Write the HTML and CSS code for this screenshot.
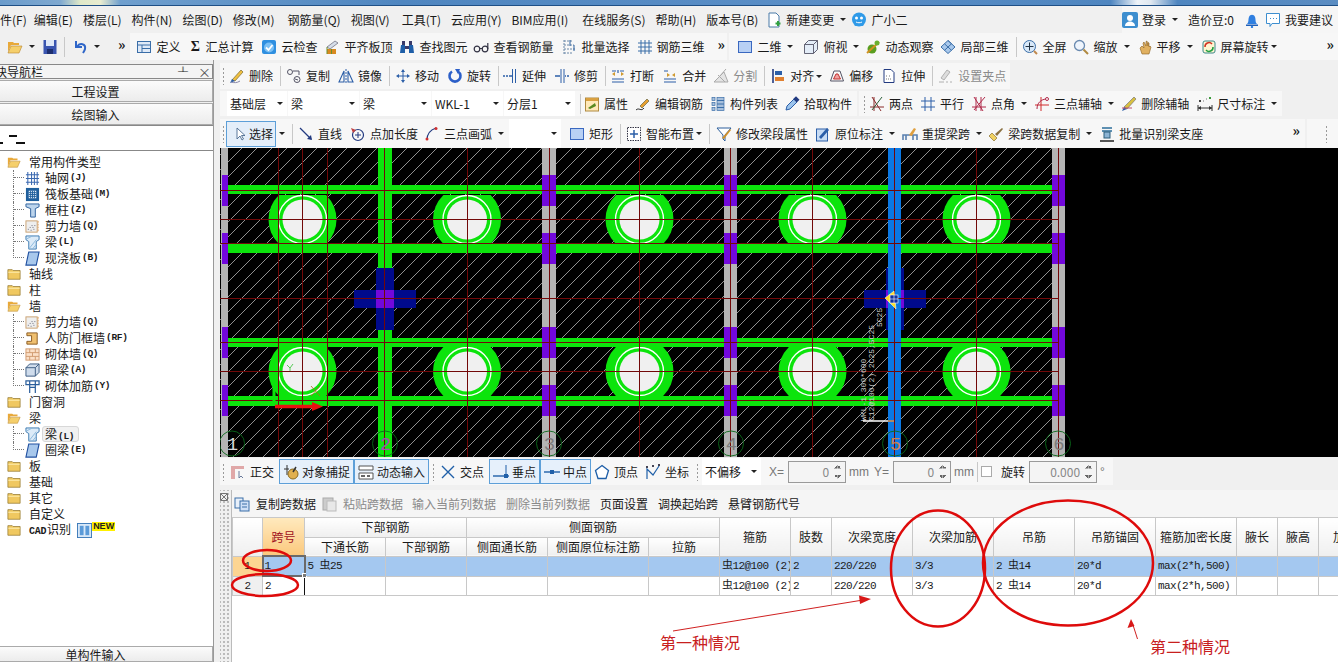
FILE: index.html
```html
<!DOCTYPE html>
<html lang="zh-CN">
<head>
<meta charset="utf-8">
<title>钢筋算量</title>
<link rel="stylesheet" href="styles.css">
</head>
<body>
<svg class="sprite" xmlns="http://www.w3.org/2000/svg">
<symbol id="folderO" viewBox="0 0 16 16"><path d="M1 3h5l1 1h5v2H4L1 13z" fill="#e8a93a"/><path d="M4 7h11l-3 7H1z" fill="#f5cf6b" stroke="#b9852c" stroke-width=".6"/></symbol>
<symbol id="folder" viewBox="0 0 16 16"><path d="M1 3h5l1 1h8v10H1z" fill="#f0c860" stroke="#8f7228" stroke-width=".8"/><path d="M1.500 6h13" stroke="#fff2b8"/></symbol>
<symbol id="floppy" viewBox="0 0 16 16"><rect x="1.500" y="1" width="13" height="14" fill="#3a55b0"/><rect x="4" y="1" width="8" height="6" fill="#dfe8f8"/><rect x="5" y="10" width="6" height="5" fill="#1d2f70"/></symbol>
<symbol id="undo" viewBox="0 0 16 16"><path d="M4 2v6h6" fill="none" stroke="#2f66c8" stroke-width="2"/><path d="M5 8c3-5 9-3 8 2-.3 1.500-1 2.500-2 4" fill="none" stroke="#2f66c8" stroke-width="2"/></symbol>
<symbol id="define" viewBox="0 0 16 16"><rect x="1.500" y="2.500" width="13" height="11" fill="#dfeaf8" stroke="#3a6ea8"/><path d="M1.500 6h13M6 6v7.500M6 9.500h8" stroke="#3a6ea8" fill="none"/></symbol>
<symbol id="cloud" viewBox="0 0 16 16"><rect x="1" y="1" width="14" height="14" rx="2" fill="#2f8fe0"/><circle cx="8" cy="8.500" r="5" fill="#7cc0f4"/><path d="M5 8.500l2.500 2.500 4-5" stroke="#fff" stroke-width="1.800" fill="none"/></symbol>
<symbol id="pingqi" viewBox="0 0 16 16"><path d="M3 8l8-6 3 2-8 6z" fill="#d5dde8" stroke="#667" stroke-width=".7"/><rect x="3" y="10" width="9" height="5" fill="#d98a20"/><path d="M3 8v7M7.500 10v5" stroke="#6a9030"/></symbol>
<symbol id="binoc" viewBox="0 0 16 16"><path d="M2 6h4v8H1zM10 6h4l1 8h-5z" fill="#1f5fa8"/><rect x="3" y="2" width="3" height="4" fill="#3a3a6a"/><rect x="10" y="2" width="3" height="4" fill="#3a3a6a"/><rect x="6" y="7" width="4" height="3" fill="#3a3a6a"/></symbol>
<symbol id="glasses" viewBox="0 0 16 16"><g fill="none" stroke="#334" stroke-width="1.200"><circle cx="4" cy="10" r="2.800"/><circle cx="12" cy="10" r="2.800"/><path d="M6.800 9.500h2.400M14.800 10V4"/></g></symbol>
<symbol id="batch" viewBox="0 0 16 16"><g fill="none" stroke="#6a88a8"><path d="M2 1v14M2 2h8M2 6h10M2 10h12M2 14h8" stroke-dasharray="2 1"/><path d="M8 1v6M12 6v6" stroke="#2b5f9c"/></g></symbol>
<symbol id="rebar" viewBox="0 0 16 16"><path d="M1 4h14M1 8h14M1 12h14M4 1v14M8 1v14M12 1v14" stroke="#3a6ea8" fill="none"/></symbol>
<symbol id="sq" viewBox="0 0 16 16"><rect x="1.500" y="2.500" width="13" height="11" fill="#b8d0f4" stroke="#3a68c0"/></symbol>
<symbol id="cube" viewBox="0 0 16 16"><path d="M1.500 5.500l4-4h9v9l-4 4h-9z" fill="#e4edf8" stroke="#556" stroke-width=".9"/><path d="M1.500 5.500h9v9M10.500 5.500l4-4" stroke="#556" fill="none" stroke-width=".9"/></symbol>
<symbol id="orbit" viewBox="0 0 16 16"><circle cx="7" cy="10" r="4.500" fill="#5a9e20"/><path d="M2 14L14 3" stroke="#d09020" stroke-width="2"/><circle cx="12" cy="4" r="2.500" fill="#6ab030"/></symbol>
<symbol id="loc3d" viewBox="0 0 16 16"><path d="M1 8l7-6.500 7 6.500-7 6.500z" fill="#a8c8ec" stroke="#3a6ea8"/><path d="M4.500 4.800l7 6.500M8 1.500l3.500 3.200M11.500 4.800l-7 6.500" stroke="#3a6ea8" fill="none"/></symbol>
<symbol id="full" viewBox="0 0 16 16"><circle cx="7.500" cy="7.500" r="6" fill="#d8e8f8" stroke="#3a6ea8"/><path d="M7.500 3.500v8M3.500 7.500h8" stroke="#234"/><path d="M12 12l3 3" stroke="#c08a50" stroke-width="2"/></symbol>
<symbol id="zoom" viewBox="0 0 16 16"><circle cx="6.500" cy="6.500" r="5" fill="#eef4fc" stroke="#6a8ab0" stroke-width="1.300"/><path d="M10.500 10.500l4.500 4.500" stroke="#b08a40" stroke-width="2"/></symbol>
<symbol id="hand" viewBox="0 0 16 16"><path d="M3 9l2 6h7l2-7-1-1-1 1V4l-1-.5V7L10 2l-1 .5V7L7 3 6 4l1 5-2-2z" fill="#e0b060" stroke="#8a6020" stroke-width=".6"/></symbol>
<symbol id="rot" viewBox="0 0 16 16"><rect x="2" y="2" width="12" height="12" rx="2" fill="#fff4d0" stroke="#3a8a8a"/><path d="M4 8a4 4 0 0 1 7-3" stroke="#d03020" stroke-width="1.500" fill="none"/><path d="M12 8a4 4 0 0 1-7 3" stroke="#20a040" stroke-width="1.500" fill="none"/></symbol>
<symbol id="del" viewBox="0 0 16 16"><path d="M3 12L12 2l2 2-8 9z" fill="#f0c040" stroke="#7a6a30" stroke-width=".7"/><path d="M1 15l2-4 3 2z" fill="#2c5fa8"/><path d="M2 14c3 1 6 1 9-1" stroke="#88a" fill="none"/></symbol>
<symbol id="copy" viewBox="0 0 16 16"><g fill="none" stroke="#556"><circle cx="4" cy="4" r="2.500"/><circle cx="11" cy="11.500" r="3"/><path d="M7 3h6M13 3v4M9 11l3 1"/></g></symbol>
<symbol id="mirror" viewBox="0 0 16 16"><path d="M8 1v14" stroke="#2c5fa8" stroke-dasharray="2 1"/><path d="M6 3v11H1zM10 3v11h5z" fill="none" stroke="#2c5fa8" stroke-width="1.100"/></symbol>
<symbol id="move" viewBox="0 0 16 16"><path d="M8 1l2 3H6zM8 15l2-3H6zM1 8l3-2v4zM15 8l-3-2v4z" fill="#2c5fa8"/><path d="M8 4v8M4 8h8" stroke="#2c5fa8"/></symbol>
<symbol id="rotate" viewBox="0 0 16 16"><path d="M5 3.500a5.500 5.500 0 1 0 6 0" fill="none" stroke="#2c5fc8" stroke-width="2.600"/><path d="M8 1h5l-2 5z" fill="#2c5fc8"/></symbol>
<symbol id="extend" viewBox="0 0 16 16"><path d="M13.500 1v14M10.500 1v14" stroke="#2c5fa8"/><path d="M1 8h2M4 8h2M7 8h3" stroke="#2c5fa8" stroke-width="1.600"/></symbol>
<symbol id="trim" viewBox="0 0 16 16"><path d="M7 1v14M10 1v14" stroke="#2c5fa8"/><path d="M1 8h5M11 8h1M13 8h2" stroke="#2c5fa8" stroke-width="1.600"/></symbol>
<symbol id="brk" viewBox="0 0 16 16"><path d="M2 3h4M10 3h4M2 11h12M2 14h12M8 2v3" stroke="#2c5fa8" stroke-width="1.200"/><path d="M2 6l3-2v4zM14 6l-3-2v4z" fill="#d09a30"/></symbol>
<symbol id="merge" viewBox="0 0 16 16"><path d="M2 3h4M2 14h12M2 11h12" stroke="#2c5fa8" stroke-width="1.200"/><path d="M5 5l3 2-3 2zM13 5l-3 2 3 2z" fill="#d09a30"/></symbol>
<symbol id="split" viewBox="0 0 16 16"><path d="M1 14h14L11 4 1 14M5 7l7 7M13 1L6 9" stroke="#aaa" fill="#e4e4e4"/></symbol>
<symbol id="align" viewBox="0 0 16 16"><path d="M3 1v14" stroke="#223a80" stroke-width="1.600"/><rect x="5" y="3" width="7" height="4" fill="#2c5fa8"/><rect x="5" y="9" width="9" height="4" fill="#e08030"/></symbol>
<symbol id="offset" viewBox="0 0 16 16"><path d="M1.500 13L5 3h6l3.500 10z" fill="none" stroke="#556" /><path d="M4.500 11L7 6h2l2.500 5z" fill="#f0a0a0" stroke="#c03030"/></symbol>
<symbol id="stretch" viewBox="0 0 16 16"><path d="M3 1.500h7l3 3V14.500H3z" fill="#fff" stroke="#223a80"/><path d="M5 8h2M8 8h2M5 11h5" stroke="#777" stroke-dasharray="1 1"/></symbol>
<symbol id="gripn" viewBox="0 0 16 16"><path d="M9 2l3 2-6 8-3-2zM1 14h5M8 14h2M12 14h2" stroke="#b0b0b0" fill="#ddd"/></symbol>
<symbol id="attr" viewBox="0 0 16 16"><rect x="1.500" y="2" width="13" height="13" fill="#ffe9b8" stroke="#b08a40"/><path d="M2 2h12v3H2z" fill="#d9a040"/><path d="M4 12l7-5 1 3-6 3z" fill="#5a8a20"/></symbol>
<symbol id="editb" viewBox="0 0 16 16"><path d="M1 14c3-3 5 2 8-2" stroke="#333" fill="none"/><path d="M5 10l7-7 2 2-7 7z" fill="#e8a030" stroke="#664" stroke-width=".7"/></symbol>
<symbol id="list" viewBox="0 0 16 16"><g fill="#a8c0dc" stroke="#3a6ea8" stroke-width=".7"><rect x="2" y="1.500" width="3" height="3"/><rect x="2" y="6.500" width="3" height="3"/><rect x="2" y="11.500" width="3" height="3"/><rect x="7" y="1.500" width="7" height="13"/></g><path d="M7 4.500h7M7 8h7M7 11.500h7" stroke="#3a6ea8"/></symbol>
<symbol id="pick" viewBox="0 0 16 16"><path d="M2 14l1-4 7-7 3 3-7 7z" fill="#9cc4ec" stroke="#2c5fa8"/><rect x="10" y="1" width="5" height="4" transform="rotate(45 12 3)" fill="#223a80"/></symbol>
<symbol id="ax2" viewBox="0 0 16 16"><path d="M3 1l9 14M1 11h14M5 1v14" stroke="#8a2a2a" fill="none"/><path d="M13 1L3 14" stroke="#2c5f3a"/></symbol>
<symbol id="par" viewBox="0 0 16 16"><path d="M1 5h14M1 11h14M5 1v14M11 1v14" stroke="#2c5fa8" fill="none"/></symbol>
<symbol id="ang" viewBox="0 0 16 16"><path d="M3 1l9 14M1 11h14M5 1v14M10 1v14" stroke="#b02a4a" fill="none"/><path d="M14 1L3 14" stroke="#b02a4a"/></symbol>
<symbol id="arc" viewBox="0 0 16 16"><path d="M1 9h14M7 1v14" stroke="#d02a2a"/><path d="M3 13c0-6 4-10 10-10" fill="none" stroke="#b02a4a"/><circle cx="13" cy="3" r="1.500" fill="#fff" stroke="#b02a4a"/></symbol>
<symbol id="delax" viewBox="0 0 16 16"><path d="M3 11L13 1l2 2L6 13z" fill="#d8c040" stroke="#667" stroke-width=".6"/><path d="M1 15l2-4 3 2z" fill="#2c5fa8"/><path d="M1 12h10" stroke="#c0506a"/></symbol>
<symbol id="dim" viewBox="0 0 16 16"><path d="M1 9v6M15 9v6M1 12h14" stroke="#333"/><path d="M1 12l3-2v4zM15 12l-3-2v4z" fill="#333"/><rect x="2" y="4" width="2" height="2" fill="#444"/><rect x="12" y="1" width="2" height="2" fill="#3a9a3a"/><path d="M6 5h1M9 3h1" stroke="#777"/></symbol>
<symbol id="cursor" viewBox="0 0 16 16"><path d="M5 2v11l3-3 2 4 1.500-1-2-3.500H13z" fill="#fff" stroke="#4a6a90" stroke-width=".9"/></symbol>
<symbol id="line" viewBox="0 0 16 16"><path d="M2 2l11 11" stroke="#223a80" stroke-width="1.200"/><path d="M14 14l-1-5-4 4z" fill="#223a80"/></symbol>
<symbol id="ptlen" viewBox="0 0 16 16"><circle cx="8" cy="9" r="5.500" fill="none" stroke="#223a80" stroke-width="1.200"/><path d="M8 6v6M5 9h6" stroke="#223a80"/><path d="M1 2l5 2-3 3z" fill="#c04040"/></symbol>
<symbol id="arc3" viewBox="0 0 16 16"><path d="M3 14C3 8 6 4 12 2" fill="none" stroke="#223a80" stroke-width="1.200"/><circle cx="3" cy="13" r="1.500" fill="#d03030"/><circle cx="12" cy="2.500" r="1.500" fill="#d03030"/></symbol>
<symbol id="smart" viewBox="0 0 16 16"><rect x="1.500" y="1.500" width="13" height="13" fill="#fff" stroke="#334" stroke-dasharray="1.500 1"/><path d="M8 4v8M4 8h8" stroke="#2c5fa8" stroke-width="1.500"/></symbol>
<symbol id="modseg" viewBox="0 0 16 16"><path d="M1 2h14L9 9v6L7 13V9z" fill="#fff" stroke="#2c5f9c"/><path d="M6 12L14 3l1 1-7 9z" fill="#d0902a"/></symbol>
<symbol id="inplace" viewBox="0 0 16 16"><rect x="1.500" y="3" width="11" height="12" fill="#c8dcf4" stroke="#2c5fa8"/><path d="M4 11l8-9 2 2-8 9z" fill="#2c5fa8"/></symbol>
<symbol id="respan" viewBox="0 0 16 16"><path d="M1 14V9h14v5M4 9v5M11 9v5" fill="none" stroke="#5a80b0" stroke-width="1.600"/><path d="M7 9l5-7 2 1-4 7z" fill="#e0a040"/></symbol>
<symbol id="brush" viewBox="0 0 16 16"><path d="M1 10l5 5 3-3-5-5z" fill="#f0d060" stroke="#887030" stroke-width=".7"/><path d="M7 8l7-6 1 1-6 7z" fill="#8a7040"/></symbol>
<symbol id="sup" viewBox="0 0 16 16"><path d="M3 2h10M3 5h10" stroke="#2c6f9c" stroke-width="1.400"/><rect x="5" y="6" width="6" height="6" fill="#8cb4d4" stroke="#2c5f7c"/><path d="M1 15h14" stroke="#555" stroke-width="2"/></symbol>
<symbol id="ortho" viewBox="0 0 16 16"><path d="M1 2h13v3H5v10H1z" fill="#e0a8a8"/><path d="M9 7v7l2-2 2 2" fill="none" stroke="#6a7a9a"/></symbol>
<symbol id="snap" viewBox="0 0 16 16"><path d="M4 1v10M1 5h5" stroke="#333"/><circle cx="10" cy="10" r="5" fill="#e0b050" stroke="#8a6a20"/><path d="M13 3l-3 5" stroke="#333" stroke-width="1.500"/></symbol>
<symbol id="dyn" viewBox="0 0 16 16"><path d="M1 2h14v4H1zM1 9h14v6H1z" fill="#fff" stroke="#555"/><path d="M3 12h4M9 12h3" stroke="#333" stroke-width="1.500"/></symbol>
<symbol id="cross" viewBox="0 0 16 16"><path d="M2 2l12 12M14 2L2 14" stroke="#1f5fa8" stroke-width="1.400"/></symbol>
<symbol id="perp" viewBox="0 0 16 16"><path d="M0 12h16" stroke="#1f5fa8" stroke-width="1.400"/><path d="M13 1v11" stroke="#1f5fa8"/><rect x="11" y="10" width="4" height="4" fill="#1f5fa8"/></symbol>
<symbol id="mid" viewBox="0 0 16 16"><path d="M0 8h16" stroke="#1f5fa8" stroke-width="1.400"/><rect x="6" y="6" width="4" height="4" fill="#1f5fa8"/></symbol>
<symbol id="vert" viewBox="0 0 16 16"><path d="M8 1.500l6.500 5-2.500 8H4l-2.500-8z" fill="#fff" stroke="#1f5fa8" stroke-width="1.300"/></symbol>
<symbol id="coord" viewBox="0 0 16 16"><path d="M2 15V5l6 6 6-9" fill="none" stroke="#1f5fa8" stroke-width="1.200"/><g fill="#445"><rect x="1" y="2" width="2" height="2"/><rect x="7" y="1" width="2" height="2"/><rect x="13" y="0" width="2" height="2"/></g></symbol>
<symbol id="cpy" viewBox="0 0 16 16"><rect x="1" y="2" width="8" height="10" fill="#e8f0fa" stroke="#3a6ea8"/><rect x="6" y="5" width="9" height="10" fill="#cfe0f6" stroke="#3a6ea8"/><path d="M8 8h5M8 11h5" stroke="#3a6ea8"/></symbol>
<symbol id="pst" viewBox="0 0 16 16"><rect x="2" y="2" width="10" height="12" fill="#ccc" stroke="#aaa"/><rect x="6" y="5" width="9" height="10" fill="#e8e8e8" stroke="#bbb"/></symbol>
<symbol id="login" viewBox="0 0 16 16"><rect width="16" height="16" rx="2" fill="#3d8ecf"/><circle cx="8" cy="6" r="3" fill="#fff"/><path d="M3 14c0-6 10-6 10 0z" fill="#fff"/></symbol>
<symbol id="bell" viewBox="0 0 16 16"><path d="M3 12c2-2 1-4 2-7s5-3 6 0 0 5 2 7z" fill="#2f7fe0"/><path d="M2 12.500h12v1.500H2z" fill="#1f5fb8"/><circle cx="8" cy="15" r="1.200" fill="#2f7fe0"/></symbol>
<symbol id="chat" viewBox="0 0 16 16"><path d="M1.500 1.500h13v10H7l-2 3v-3H1.500z" fill="#fff" stroke="#3d8ecf"/><path d="M5 6.500h1M8 6.500h1M11 6.500h1" stroke="#3d8ecf"/></symbol>
<symbol id="newdoc" viewBox="0 0 16 16"><path d="M3 1h7l3 3v11H3z" fill="#fff" stroke="#4a7aa8"/><path d="M12 9v5M9.500 11.500h5" stroke="#30a040" stroke-width="2"/></symbol>
<symbol id="gxe" viewBox="0 0 16 16"><circle cx="8" cy="7.500" r="7" fill="#2f9ae8"/><path d="M3 14l3-2h4l3 2z" fill="#2f9ae8"/><circle cx="5.500" cy="6" r="1.500" fill="#fff"/><circle cx="10.500" cy="6" r="1.500" fill="#fff"/><path d="M5 10c2 1 4 1 6 0" stroke="#fff" fill="none"/></symbol>
<symbol id="tAxis" viewBox="0 0 16 16"><path d="M1 4h14M1 8h14M1 12h14M3 1v14M7 1v14M10 1v14M13 1v14" stroke="#3a68b0" stroke-width="1.100"/></symbol>
<symbol id="tRaft" viewBox="0 0 16 16"><rect x="1" y="1" width="14" height="14" fill="#1f5f9c"/><rect x="4" y="4" width="8" height="8" fill="#e8f0fa"/><path d="M4 6h8M4 8h8M4 10h8M6 4v8M8 4v8M10 4v8" stroke="#1f5f9c"/></symbol>
<symbol id="tCol" viewBox="0 0 16 16"><path d="M1 1h14v3l-4 2v9H6V6L1 4z" fill="#bcd4ec" stroke="#2c5f9c"/></symbol>
<symbol id="tWall" viewBox="0 0 16 16"><rect x="1" y="2" width="12" height="12" fill="#eee" stroke="#c9a070"/><path d="M3 11h1M6 12h1M9 11h1M5 9h1M8 9h1M10 7h1M7 7h1" stroke="#667"/><path d="M14 2v12" stroke="#e0a060" stroke-dasharray="2 1"/></symbol>
<symbol id="tBeam" viewBox="0 0 16 16"><path d="M1 1h14v4l-3 2v8H4V7L1 5z" fill="#dcebf8" stroke="#3a78b0"/><path d="M4 15l8-10M8 15l4-5M2 4l6-3" stroke="#8ab8dc"/></symbol>
<symbol id="tSlab" viewBox="0 0 16 16"><path d="M4 1h11l-3 14H1z" fill="#a8c8ec" stroke="#2050a0" stroke-width="1.200"/></symbol>
<symbol id="tDoor" viewBox="0 0 16 16"><path d="M2 2h11v12H2v-3h5V5H2z" fill="#f0c070" stroke="#8a5a20"/></symbol>
<symbol id="tBrick" viewBox="0 0 16 16"><rect x="1" y="2" width="14" height="12" fill="#fbe0c8" stroke="#d09a70"/><path d="M1 6h14M1 10h14M5 2v4M11 2v4M8 6v4M5 10v4M11 10v4" stroke="#d09a70"/></symbol>
<symbol id="tHid" viewBox="0 0 16 16"><path d="M1 5l4-4h10v9l-4 4H1z" fill="#cfdcec" stroke="#3a5a80"/><path d="M1 5h10v9M11 5l4-4" fill="none" stroke="#3a5a80"/></symbol>
<symbol id="tAdd" viewBox="0 0 16 16"><path d="M1 2h14v4H1z" fill="none" stroke="#2c5f9c" stroke-width="1.300"/><path d="M5 2v13M11 2v13M5 9h6" stroke="#2c5f9c" stroke-width="1.300"/></symbol>
<symbol id="tCad" viewBox="0 0 16 16"><rect x=".5" y=".5" width="15" height="15" fill="#d8e8f8" stroke="#3a78b8"/><rect x="3" y="3" width="4" height="10" fill="#5a9ad8"/><rect x="9" y="3" width="4" height="10" fill="#5a9ad8"/></symbol>
</svg>

<div class="app">
<div class="title"></div>

<nav class="menu">
<span class="clip12">文件(F)</span><span>编辑(E)</span><span>楼层(L)</span><span>构件(N)</span><span>绘图(D)</span><span>修改(M)</span><span class="mp3">钢筋量(Q)</span><span>视图(V)</span><span class="mp2">工具(T)</span><span>云应用(Y)</span><span>BIM应用(I)</span><span class="mp4">在线服务(S)</span><span>帮助(H)</span><span>版本号(B)</span>
<span class="it mn2"><svg class="ic"><use href="#newdoc"/></svg>新建变更<i class="caret"></i></span>
<span class="it"><svg class="ic"><use href="#gxe"/></svg>广小二</span>
<span class="menu-right">
<span class="it"><svg class="ic"><use href="#login"/></svg>登录<i class="caret"></i></span>
<span>造价豆:0</span>
<svg class="ic bellic"><use href="#bell"/></svg>
<span class="it"><svg class="ic"><use href="#chat"/></svg>我要建议</span>
</span>
</nav>

<div class="tool1">
<svg class="ic"><use href="#folderO"/></svg><i class="caret c9"></i>
<svg class="ic"><use href="#floppy"/></svg><i class="sep"></i>
<svg class="ic"><use href="#undo"/></svg><i class="caret c9"></i>
<b class="more">»</b>
<span class="seg1">
<span class="it"><svg class="ic"><use href="#define"/></svg>定义</span>
<span class="it"><b class="sigma">Σ</b>汇总计算</span>
<span class="it"><svg class="ic"><use href="#cloud"/></svg>云检查</span>
<span class="it mn1"><svg class="ic"><use href="#pingqi"/></svg>平齐板顶</span>
<span class="it mn1"><svg class="ic"><use href="#binoc"/></svg>查找图元</span>
<span class="it mn2"><svg class="ic"><use href="#glasses"/></svg>查看钢筋量</span>
<span class="it"><svg class="ic"><use href="#batch"/></svg>批量选择</span>
<span class="it mn1"><svg class="ic"><use href="#rebar"/></svg>钢筋三维</span>
<b class="more m2">»</b>
</span>
<span class="seg2">
<span class="it"><svg class="ic"><use href="#sq"/></svg>二维<i class="caret"></i></span>
<span class="it mp2"><svg class="ic"><use href="#cube"/></svg>俯视<i class="caret"></i></span>
<span class="it mn2"><svg class="ic"><use href="#orbit"/></svg>动态观察</span>
<span class="it mn1"><svg class="ic"><use href="#loc3d"/></svg>局部三维</span>
<i class="sep"></i>
<span class="it mn8"><svg class="ic"><use href="#full"/></svg>全屏</span>
<span class="it mn1"><svg class="ic"><use href="#zoom"/></svg>缩放<i class="caret"></i></span>
<span class="it mn1"><svg class="ic"><use href="#hand"/></svg>平移<i class="caret"></i></span>
<span class="it"><svg class="ic"><use href="#rot"/></svg>屏幕旋转<i class="caret tight"></i></span>
<b class="more end">»</b>
</span>
</div>

<div class="main">
<aside class="side">
<div class="side-head"><span class="clip17">模块导航栏</span><span class="pin">╨</span><span class="closex">×</span></div>
<div class="side-btn">工程设置</div>
<div class="side-btn">绘图输入</div>
<div class="mini"><i class="m-a"></i><i class="m-b"></i></div>
<div class="tree">
<div class="node"><svg class="ic"><use href="#folderO"/></svg>常用构件类型</div>
<div class="kids">
<div class="kid"><i class="elbow"></i><svg class="ic"><use href="#tAxis"/></svg>轴网<em>(J)</em></div>
<div class="kid"><i class="elbow"></i><svg class="ic"><use href="#tRaft"/></svg>筏板基础<em>(M)</em></div>
<div class="kid"><i class="elbow"></i><svg class="ic"><use href="#tCol"/></svg>框柱<em>(Z)</em></div>
<div class="kid"><i class="elbow"></i><svg class="ic"><use href="#tWall"/></svg>剪力墙<em>(Q)</em></div>
<div class="kid"><i class="elbow"></i><svg class="ic"><use href="#tBeam"/></svg>梁<em>(L)</em></div>
<div class="kid"><i class="elbow"></i><svg class="ic"><use href="#tSlab"/></svg>现浇板<em>(B)</em></div>
</div>
<div class="node"><svg class="ic"><use href="#folder"/></svg>轴线</div>
<div class="node"><svg class="ic"><use href="#folder"/></svg>柱</div>
<div class="node"><svg class="ic"><use href="#folderO"/></svg>墙</div>
<div class="kids">
<div class="kid"><i class="elbow"></i><svg class="ic"><use href="#tWall"/></svg>剪力墙<em>(Q)</em></div>
<div class="kid"><i class="elbow"></i><svg class="ic"><use href="#tDoor"/></svg>人防门框墙<em>(RF)</em></div>
<div class="kid"><i class="elbow"></i><svg class="ic"><use href="#tBrick"/></svg>砌体墙<em>(Q)</em></div>
<div class="kid"><i class="elbow"></i><svg class="ic"><use href="#tHid"/></svg>暗梁<em>(A)</em></div>
<div class="kid"><i class="elbow"></i><svg class="ic"><use href="#tAdd"/></svg>砌体加筋<em>(Y)</em></div>
</div>
<div class="node"><svg class="ic"><use href="#folder"/></svg>门窗洞</div>
<div class="node"><svg class="ic"><use href="#folderO"/></svg>梁</div>
<div class="kids">
<div class="kid active"><i class="elbow"></i><svg class="ic"><use href="#tBeam"/></svg><span class="pill">梁<em>(L)</em></span></div>
<div class="kid"><i class="elbow"></i><svg class="ic"><use href="#tSlab"/></svg>圈梁<em>(E)</em></div>
</div>
<div class="node"><svg class="ic"><use href="#folder"/></svg>板</div>
<div class="node"><svg class="ic"><use href="#folder"/></svg>基础</div>
<div class="node"><svg class="ic"><use href="#folder"/></svg>其它</div>
<div class="node"><svg class="ic"><use href="#folder"/></svg>自定义</div>
<div class="node"><svg class="ic"><use href="#folder"/></svg><span class="cadname"><em class="cad">CAD</em>识别</span><svg class="ic cadic"><use href="#tCad"/></svg><b class="newtag">NEW</b></div>
</div>
<div class="side-btn last">单构件输入</div>
</aside>

<section class="work">
<div class="bar a">
<span class="seg"><i class="grip"></i>
<span class="it"><svg class="ic"><use href="#del"/></svg>删除</span><i class="sep"></i>
<span class="it"><svg class="ic"><use href="#copy"/></svg>复制</span>
<span class="it"><svg class="ic"><use href="#mirror"/></svg>镜像</span><i class="sep"></i>
<span class="it"><svg class="ic"><use href="#move"/></svg>移动</span>
<span class="it"><svg class="ic"><use href="#rotate"/></svg>旋转</span><i class="sep"></i>
<span class="it mn2"><svg class="ic"><use href="#extend"/></svg>延伸</span>
<span class="it"><svg class="ic"><use href="#trim"/></svg>修剪</span><i class="sep"></i>
<span class="it mn1"><svg class="ic"><use href="#brk"/></svg>打断</span>
<span class="it"><svg class="ic"><use href="#merge"/></svg>合并</span>
<span class="it off mn1"><svg class="ic"><use href="#split"/></svg>分割</span><i class="sep"></i>
<span class="it"><svg class="ic"><use href="#align"/></svg>对齐<i class="caret tight"></i></span>
<span class="it mn1"><svg class="ic"><use href="#offset"/></svg>偏移</span>
<span class="it"><svg class="ic"><use href="#stretch"/></svg>拉伸</span><i class="sep"></i>
<span class="it off"><svg class="ic"><use href="#gripn"/></svg>设置夹点</span>
</span>
</div>

<div class="bar b">
<span class="seg">
<span class="combo w62">基础层<i class="caret"></i></span>
<span class="combo w70">梁<i class="caret"></i></span>
<span class="combo w70">梁<i class="caret"></i></span>
<span class="combo w70">WKL-1<i class="caret"></i></span>
<span class="combo w70">分层1<i class="caret"></i></span>
<i class="sep"></i>
<span class="it mn2"><svg class="ic"><use href="#attr"/></svg>属性</span>
<span class="it mn1"><svg class="ic"><use href="#editb"/></svg>编辑钢筋</span>
<span class="it mn1"><svg class="ic"><use href="#list"/></svg>构件列表</span>
<span class="it mn2"><svg class="ic"><use href="#pick"/></svg>拾取构件</span>
</span>
<span class="seg second"><i class="grip"></i>
<span class="it"><svg class="ic"><use href="#ax2"/></svg>两点</span>
<span class="it"><svg class="ic"><use href="#par"/></svg>平行</span>
<span class="it"><svg class="ic"><use href="#ang"/></svg>点角<i class="caret"></i></span>
<span class="it"><svg class="ic"><use href="#arc"/></svg>三点辅轴<i class="caret"></i></span>
<span class="it"><svg class="ic"><use href="#delax"/></svg>删除辅轴</span>
<span class="it mp1"><svg class="ic"><use href="#dim"/></svg>尺寸标注<i class="caret"></i></span>
</span>
</div>

<div class="bar c">
<span class="seg full"><i class="grip"></i>
<span class="it btn sel"><svg class="ic"><use href="#cursor"/></svg>选择</span><i class="caret solo"></i><i class="sep"></i>
<span class="it"><svg class="ic"><use href="#line"/></svg>直线</span>
<span class="it"><svg class="ic"><use href="#ptlen"/></svg>点加长度</span>
<span class="it mn2"><svg class="ic"><use href="#arc3"/></svg>三点画弧<i class="caret"></i></span>
<span class="combo w55 mn3"><i class="caret"></i></span>
<span class="it"><svg class="ic"><use href="#sq"/></svg>矩形</span><i class="sep"></i>
<span class="it"><svg class="ic"><use href="#smart"/></svg>智能布置<i class="caret tight"></i></span><i class="sep"></i>
<span class="it mp1"><svg class="ic"><use href="#modseg"/></svg>修改梁段属性</span>
<span class="it mn1"><svg class="ic"><use href="#inplace"/></svg>原位标注<i class="caret"></i></span>
<span class="it mn1"><svg class="ic"><use href="#respan"/></svg>重提梁跨<i class="caret"></i></span>
<span class="it mn2"><svg class="ic"><use href="#brush"/></svg>梁跨数据复制<i class="caret"></i></span>
<span class="it mn1"><svg class="ic"><use href="#sup"/></svg>批量识别梁支座</span>
<b class="more end">»</b>
</span>
<span class="seg tail"><i class="grip"></i></span>
</div>

<svg class="canvas" viewBox="220 148 1118 309" xmlns="http://www.w3.org/2000/svg">
<defs>
<pattern id="hatch" width="15" height="15" patternUnits="userSpaceOnUse"><path d="M-1 16L16-1" stroke="#cfcfcf" stroke-width=".7"/></pattern>
<clipPath id="clipc"><rect x="220" y="195" width="850" height="49"/><rect x="220" y="347" width="850" height="49"/></clipPath>
</defs>
<rect x="220" y="148" width="1118" height="309" fill="#000"/>
<rect x="220" y="148" width="845" height="309" fill="url(#hatch)"/>
<g clip-path="url(#clipc)" fill="#0ce40c">
<circle cx="302.500" cy="219.500" r="34"/><circle cx="467" cy="219.500" r="34"/><circle cx="639.500" cy="219.500" r="34"/><circle cx="812.500" cy="219.500" r="34"/><circle cx="976.500" cy="219.500" r="34"/>
<circle cx="302.500" cy="371.500" r="34"/><circle cx="467" cy="371.500" r="34"/><circle cx="639.500" cy="371.500" r="34"/><circle cx="812.500" cy="371.500" r="34"/><circle cx="976.500" cy="371.500" r="34"/>
<rect x="278" y="347" width="49" height="12"/>
</g>
<g fill="#0ce40c" stroke="#fff" stroke-width="1.300">
<circle cx="302.500" cy="219.500" r="24"/><circle cx="467" cy="219.500" r="24"/><circle cx="639.500" cy="219.500" r="24"/><circle cx="812.500" cy="219.500" r="24"/><circle cx="976.500" cy="219.500" r="24"/>
<circle cx="302.500" cy="371.500" r="24"/><circle cx="467" cy="371.500" r="24"/><circle cx="639.500" cy="371.500" r="24"/><circle cx="812.500" cy="371.500" r="24"/><circle cx="976.500" cy="371.500" r="24"/>
</g>
<g fill="#f0f0f0">
<circle cx="302.500" cy="219.500" r="20"/><circle cx="467" cy="219.500" r="20"/><circle cx="639.500" cy="219.500" r="20"/><circle cx="812.500" cy="219.500" r="20"/><circle cx="976.500" cy="219.500" r="20"/>
<circle cx="302.500" cy="371.500" r="20"/><circle cx="467" cy="371.500" r="20"/><circle cx="639.500" cy="371.500" r="20"/><circle cx="812.500" cy="371.500" r="20"/><circle cx="976.500" cy="371.500" r="20"/>
</g>
<g fill="#0ce40c">
<rect x="227" y="185" width="826" height="9"/><rect x="227" y="244" width="826" height="9"/><rect x="227" y="338" width="826" height="9"/><rect x="227" y="396" width="826" height="10"/>
<rect x="378" y="148" width="14" height="309"/>
</g>
<g fill="#b4b4b4"><rect x="221" y="148" width="7" height="309"/><rect x="542" y="148" width="14" height="309"/><rect x="724" y="148" width="13" height="309"/><rect x="1052" y="148" width="13" height="309"/></g>
<g fill="#7208dc">
<rect x="222" y="175" width="6" height="31"/><rect x="222" y="233" width="6" height="31"/><rect x="222" y="327" width="6" height="31"/><rect x="222" y="385" width="6" height="31"/>
<rect x="542" y="175" width="14" height="31"/><rect x="542" y="233" width="14" height="31"/><rect x="542" y="327" width="14" height="31"/><rect x="542" y="385" width="14" height="31"/>
<rect x="724" y="175" width="13" height="31"/><rect x="724" y="233" width="13" height="31"/><rect x="724" y="327" width="13" height="31"/><rect x="724" y="385" width="13" height="31"/>
<rect x="1052" y="175" width="13" height="31"/><rect x="1052" y="233" width="13" height="31"/><rect x="1052" y="327" width="13" height="31"/><rect x="1052" y="385" width="13" height="31"/>
</g>
<g fill="#000a8c">
<rect x="376" y="268" width="18" height="62"/><rect x="354" y="290" width="62" height="18"/>
<rect x="886" y="268" width="18" height="62"/><rect x="864" y="290" width="62" height="18"/>
</g>
<rect x="376" y="290" width="18" height="18" fill="#7208dc"/>
<rect x="886" y="290" width="18" height="18" fill="#7208dc"/>
<rect x="888" y="148" width="13" height="309" fill="#0a78e4"/>
<g stroke="#720808" stroke-width="1" fill="none">
<path d="M220 190.500H1058M220 219.500H1058M220 243.500H1058M220 298.500H1058M220 342.500H1058M220 371.500H1058M220 400.500H1058"/>
<path d="M278.500 148V457M302.500 148V457M327.500 148V457M384.500 148V457M467.500 148V457M549.500 148V457M639.500 148V457M730.500 148V457M812.500 148V457M894.500 148V457M976.500 148V457M1058.500 148V457"/>
</g>
<g>
<path d="M885 298l9-7 2 18z" fill="#ffe020" stroke="#fff" stroke-width=".5"/>
<rect x="890" y="295" width="8" height="8" fill="#1030a0" stroke="#fff" stroke-width=".6"/>
<path d="M894 295v8M890 299h8" stroke="#fff" stroke-width=".6"/>
</g>
<g class="rot-text">
<text transform="translate(866 421) rotate(-90)">WKL-1 300*600</text>
<text transform="translate(873.500 421) rotate(-90)">C12@100(2) 2C25;5C25</text>
<text transform="translate(881.500 327) rotate(-90)">5C25</text>
</g>
<path d="M863 421H888" stroke="#fff" stroke-width="1.500"/><path d="M888 421H894" stroke="#e09040" stroke-width="1.500"/>
<path d="M274 384V406" stroke="#0ce40c" stroke-width="3"/>
<path d="M275 406.500H312" stroke="#e81010" stroke-width="3.500"/><path d="M312 402l11 4.500-11 4.500z" fill="#e81010"/>
<path d="M287 365l3 3 3-4M290 368v3" stroke="#30c030" fill="none" stroke-width=".8"/>
<path d="M311 386l9 10M320 386l-9 10" stroke="#b06020" fill="none" stroke-width=".8"/>
<g fill="none" stroke="#0a6a1a" stroke-width=".9">
<circle cx="232" cy="443.500" r="12.500"/><circle cx="385" cy="443.500" r="12.500"/><circle cx="549" cy="443.500" r="12.500"/><circle cx="731" cy="443.500" r="12.500"/><circle cx="895" cy="443.500" r="12.500"/><circle cx="1058" cy="443.500" r="12.500"/>
</g>
<g class="axis-num">
<text x="232.500" y="450" class="n1">1</text><text x="385.500" y="450" class="n2">2</text><text x="549.500" y="450" class="n3">3</text><text x="731.500" y="450" class="n3">4</text><text x="895.500" y="450" class="n5">5</text><text x="1059" y="450" class="n3">6</text>
</g>
</svg>

<div class="bar snap">
<span class="seg"><i class="grip"></i>
<span class="it mp2"><svg class="ic"><use href="#ortho"/></svg>正交</span>
<span class="it btn on w75 mn2"><svg class="ic"><use href="#snap"/></svg>对象捕捉</span>
<span class="it btn on w75"><svg class="ic"><use href="#dyn"/></svg>动态输入</span>
<i class="grip g2"></i>
<span class="it mn2"><svg class="ic"><use href="#cross"/></svg>交点</span>
<span class="it btn on w51 mn2"><svg class="ic"><use href="#perp"/></svg>垂点</span>
<span class="it btn on w51"><svg class="ic"><use href="#mid"/></svg>中点</span>
<span class="it n1a"><svg class="ic"><use href="#vert"/></svg>顶点</span>
<span class="it"><svg class="ic"><use href="#coord"/></svg>坐标</span>
<i class="grip"></i>
<span class="combo w59">不偏移<i class="caret"></i></span>
<span class="lbl first">X=</span><span class="spin w58">0<i class="sp"></i></span><span class="lbl">mm</span>
<span class="lbl y">Y=</span><span class="spin w58">0<i class="sp"></i></span><span class="lbl">mm</span><i class="sep"></i>
<i class="check"></i><span class="rt">旋转</span><span class="spin w68">0.000<i class="sp"></i></span><span class="lbl">°</span>
</span>
</div>

<div class="panel">
<div class="dots"><svg class="cornerx" viewBox="0 0 8 8"><path d="M.5.500h7v7h-7zM1 1l6 6M7 1L1 7" stroke="#555" fill="#eee" stroke-width=".8"/></svg></div>
<div class="pmain">
<div class="ptools">
<span class="it"><svg class="ic"><use href="#cpy"/></svg>复制跨数据</span>
<span class="it off mn2"><svg class="ic"><use href="#pst"/></svg>粘贴跨数据</span>
<span class="off mp2">输入当前列数据</span>
<span class="off">删除当前列数据</span>
<span>页面设置</span>
<span>调换起始跨</span>
<span>悬臂钢筋代号</span>
</div>
<div class="twrap">
<table class="grid">
<colgroup><col class="c30"><col class="c42"><col class="c81"><col class="c81"><col class="c81"><col class="c101"><col class="c71"><col class="c71"><col class="c41"><col class="c81"><col class="c81"><col class="c81"><col class="c81"><col class="c81"><col class="c41"><col class="c41"><col class="c41"></colgroup>
<thead>
<tr><th rowspan="2" class="corner"></th><th rowspan="2" class="span-h">跨号</th><th colspan="2">下部钢筋</th><th colspan="3">侧面钢筋</th><th rowspan="2">箍筋</th><th rowspan="2">肢数</th><th rowspan="2">次梁宽度</th><th rowspan="2">次梁加筋</th><th rowspan="2">吊筋</th><th rowspan="2">吊筋锚固</th><th rowspan="2">箍筋加密长度</th><th rowspan="2">腋长</th><th rowspan="2">腋高</th><th rowspan="2">加</th></tr>
<tr><th>下通长筋</th><th>下部钢筋</th><th>侧面通长筋</th><th>侧面原位标注筋</th><th>拉筋</th></tr>
</thead>
<tbody>
<tr class="selrow"><td class="rh on">1</td><td class="cur">1<i class="handle"></i></td><td>5 虫25</td><td></td><td></td><td></td><td></td><td>虫12@100 (2)</td><td>2</td><td>220/220</td><td>3/3</td><td>2 虫14</td><td>20*d</td><td>max(2*h,500)</td><td></td><td></td><td></td></tr>
<tr><td class="rh">2</td><td class="caretcell">2</td><td></td><td></td><td></td><td></td><td></td><td>虫12@100 (2)</td><td>2</td><td>220/220</td><td>3/3</td><td>2 虫14</td><td>20*d</td><td>max(2*h,500)</td><td></td><td></td><td></td></tr>
</tbody>
</table>
</div>
</div>
</div>
</section>
</div>

<svg class="notes" viewBox="0 0 1338 662" xmlns="http://www.w3.org/2000/svg">
<g fill="none" stroke="#de0b0b" stroke-width="2.500">
<ellipse cx="267" cy="560.500" rx="24" ry="10.500"/>
<ellipse cx="265" cy="585" rx="33" ry="11"/>
<ellipse cx="938" cy="568.500" rx="47" ry="58"/>
<ellipse cx="1068" cy="563" rx="85" ry="62.500"/>
</g>
<path d="M673 631L860 600.500M1137.500 639L1133 625" stroke="#d02020" stroke-width="1" fill="none"/>
<path d="M871 599l-12-3.500 1 8.500zM1131 619l-3.500 9 7-2z" fill="#d81818"/>
<text x="660" y="649" class="note">第一种情况</text>
<text x="1150" y="653" class="note">第二种情况</text>
</svg>
</div>
</body>
</html>
```
FILE: styles.css
```css
*{box-sizing:border-box}
html,body{margin:0;padding:0;height:100%;overflow:hidden}
body{font:12px/16px "Noto Sans CJK SC","Liberation Sans",sans-serif;color:#1a1a1a;background:#f0f0f0}
.sprite{width:0;height:0;display:block;overflow:hidden}
.app{position:relative;width:1338px;height:662px;display:flex;flex-direction:column;overflow:hidden}
.title{height:6px;flex:none;border-bottom:1px solid #1e4f86;background:linear-gradient(90deg,#6a9bcb 0,#7fa9d0 4.500%,#dfe8c8 6%,#e8ecd0 7.500%,#6f9fce 9%,#4f86c0 30%,#5a8ec6 60%,#4f86c0 83%,#eef3f8 85%,#e0e8f0 86%,#4f86c0 88%,#5b8dc2 100%)}
.ic{width:16px;height:16px;flex:none;display:block}
.it{display:inline-flex;align-items:center;gap:4px;white-space:nowrap;flex:none}
.off{color:#8a8a8a}
.mn1{margin-left:-1px}.mn2{margin-left:-2px}.mn3{margin-left:-3px}.mn8{margin-left:-8px}
.mp1{margin-left:1px}.mp2{margin-left:2px}.mp3{margin-left:3px}.mp4{margin-left:4px}
.caret{display:inline-block;flex:none;width:0;height:0;border:3px solid transparent;border-top:3px solid #222;border-bottom:0;margin:0 0 0 2px}
.caret.tight{margin-left:-2px}
.sep{display:block;flex:none;width:1px;height:20px;background:#c8c8c8;margin:0 5px 0 0}
.grip{display:block;flex:none;width:3px;height:18px;margin:0 4px 0 2px;background:radial-gradient(circle,#9a9a9a 0 1px,transparent 1.100px) 0 0/3px 4px}
.more{font-weight:bold;font-size:14px;line-height:10px;align-self:flex-start;margin-top:6px;flex:none}

.menu{height:27px;flex:none;display:flex;align-items:center;gap:10px;padding-left:0;background:#f0f0f0;white-space:nowrap}
.clip12{margin-left:-12px;margin-right:-3px}
.menu>.it+.it{margin-left:-5px}
.menu-right{margin-left:auto;display:flex;align-items:center;gap:10px;padding:0 5px 0 0;height:27px;background:#f6f6f6}
.menu-right .caret{margin-left:2px}
.bellic{margin-right:-5px}

.tool1{height:27px;flex:none;display:flex;align-items:center;padding-left:7px}
.c9{margin:0 7px 0 6px}
.tool1>.sep{margin:0 7px 0 6px}
.tool1>.more{margin-left:11px;margin-right:5px}
.seg1,.seg2{display:flex;align-items:center;gap:8px;height:27px;background:#f7f7f7;padding-left:6px;flex:none}
.seg1{width:597px}
.seg1 .more,.seg2 .more{margin-left:5px}
.seg2{flex:1;margin-left:2px;padding-left:8px}
.seg2 .more.end{margin-left:auto;margin-right:4px}
.sigma{font:bold 14px "Liberation Serif",serif;width:12px;text-align:center;margin-right:0;margin-left:1px}

.main{flex:1;display:flex;min-height:0}
.side{width:214px;flex:none;display:flex;flex-direction:column;padding-top:4px;overflow:hidden;border-right:1px solid #999}
.side-head{height:15px;flex:none;display:flex;align-items:center;border:1px solid #888;border-left:0;background:#f4f4f4;overflow:hidden}
.clip17{margin-left:-17px;flex:1;line-height:13px}
.pin{font-size:10px;line-height:12px;width:14px;margin-right:6px;color:#222}
.closex{font-size:13px;line-height:12px;width:14px;color:#555}
.side-btn{height:22px;flex:none;line-height:21px;text-align:center;padding-right:21px;border:1px solid #aaa;border-left:0;background:linear-gradient(#fbfbfb,#ececec);margin-top:1px}
.side-btn.last{margin-top:0;height:16px;line-height:16px}
.mini{height:25px;flex:none;background:#fff;display:flex;align-items:flex-end;padding-bottom:6px;gap:6px;border-top:1px solid #888}
.m-a{width:3px;height:2px;background:#111;display:block}
.m-b{width:16px;height:9px;display:block;background:linear-gradient(#111,#111) 0 0/8px 2px no-repeat,linear-gradient(#111,#111) 7px 7px/9px 2px no-repeat}
.tree{flex:1;background:#fff;border-top:1px solid #888;padding-top:3px;overflow:hidden}
.node{height:16px;display:flex;align-items:center;gap:7px;padding-left:4px;white-space:nowrap}
.node .ic{width:16px;height:14px}
.node::before{content:"";display:block;width:1px;height:1px;margin-right:-6px}
.kids{margin-left:13px}
.kid{height:16px;display:flex;align-items:center;border-left:1px dotted #777;white-space:nowrap}
.kid:last-child{border-left-color:transparent}
.elbow{display:block;flex:none;width:10px;height:8px;align-self:flex-start;border-bottom:1px dotted #777;margin-right:1px}
.kid:last-child .elbow{border-left:1px dotted #777;margin-left:-1px;width:11px}
.kid .ic{margin-right:5px;width:15px;height:15px}
em{font:bold 9.500px/16px "Liberation Mono",monospace;font-style:normal;letter-spacing:-.3px;margin-left:1px}
.pill{background:#f1f1f1;border:1px solid #d8d8d8;border-radius:3px;padding:0 4px 0 2px;margin-left:-3px;height:16px;line-height:14px;display:block}
.pill em{line-height:14px}
.cad{margin:0 1px 0 0;font-size:10px}
.node .cadic{margin-left:-1px;width:15px;height:15px}
.newtag{font:bold 9px/9px "Liberation Sans",sans-serif;color:#222;background:#fff000;padding:0 1px;align-self:flex-start;margin:0 0 0 -7px}

.work{flex:1;min-width:0;margin-left:6px;display:flex;flex-direction:column;padding-top:3px}
.bar{display:flex;flex:none;align-items:stretch}
.seg{display:flex;align-items:center;gap:8px;background:#f7f7f7;flex:none;padding-left:2px}
.seg>.sep{margin:0 -3px 0 -1px}
.seg>.grip{margin:0 -1px 0 0}
.bar.a{height:26px}
.bar.a .seg{padding-right:4px}
.bar.a .grip{margin-right:-4px}
.bar.b{height:25px;margin-top:2px}
.bar.b .seg{padding:0 5px 0 7px;gap:8px}
.seg.second{margin-left:2px;gap:7px!important;padding-left:4px!important}
.seg.second .grip{margin-right:-4px}
.bar.c{height:29px;margin-top:3px}
.bar.c .grip{margin-right:-7px}
.seg.full{width:1085px;padding-left:2px}
.seg.full .more.end{margin-left:auto;margin-right:5px}
.seg.tail{margin-left:2px;flex:1;justify-content:center;padding:0}
.combo{display:flex;align-items:center;justify-content:space-between;background:#fff;height:100%;padding:0 4px 0 3px;flex:none;margin-right:-7px}
.combo+.sep{margin-left:4px}
.w62{width:60px}.w59{width:60px}.w70{width:71px}
.w55{width:52px;margin-right:0;justify-content:flex-end}
.combo.mn3{margin-left:-3px}
.btn{height:24px;padding:0 3px;border:1px solid #5d9fd8}
.btn.sel{width:50px;background:#e4eef9;padding-left:5px;height:26px;gap:1px}
.btn.on{background:#e6f0fb}
.w75{width:75px;margin-right:-8px}
.w51{width:51px;margin-right:-8px}
.caret.solo{margin-left:-5px}
.canvas{display:block;flex:none;width:1118px;height:309px}
.rot-text text{font:8px "Liberation Mono",monospace;fill:#d0d0d0}
.axis-num text{font:19px "Liberation Mono",monospace;text-anchor:middle}
.n1{fill:#d8d8d8}.n2{fill:#a050b0}.n3{fill:#7c7c7c}.n5{fill:#c88050}

.bar.snap{height:27px;margin-top:1px}
.snap .seg{gap:4px;padding-right:8px}
.snap .it{margin-right:3px}
.snap .btn.on{margin-right:-4px;gap:3px;height:25px}
.snap .n1a{margin-left:3px}
.snap .grip.g2{margin:0 3px}
.snap .combo{margin:0;width:59px}
.lbl{color:#777;font-family:"Liberation Sans",sans-serif;flex:none;margin-left:-1px}
.lbl.first{margin-left:4px}
.lbl.y{margin-left:1px}
.spin{height:22px;display:flex;align-items:center;justify-content:flex-end;border:1px solid #9a9a9a;color:#888;background:#f4f4f4;padding-right:16px;position:relative;flex:none}
.w58{width:58px}.w68{width:68px}
.sp{position:absolute;right:4px;top:3px;width:7px;height:14px;background:linear-gradient(135deg,transparent 50%,#666 50%) 0 0/3.500px 3.500px no-repeat,linear-gradient(225deg,transparent 50%,#666 50%) 3.500px 0/3.500px 3.500px no-repeat,linear-gradient(45deg,transparent 50%,#666 50%) 0 10px/3.500px 3.500px no-repeat,linear-gradient(315deg,transparent 50%,#666 50%) 3.500px 10px/3.500px 3.500px no-repeat}
.check{display:block;flex:none;width:11px;height:11px;border:1px solid #aaa;background:#fff;margin:0 5px 0 2px}
.rt{flex:none;margin-right:0}

.panel{flex:1;min-height:0;display:flex;margin-top:5px}
.dots{width:12px;flex:none;background:radial-gradient(circle,#bbb 0 .9px,transparent 1.100px) 2px 18px/4px 4px repeat;background-color:#f0f0f0;border-right:1px solid #bbb}
.cornerx{display:block;width:8px;height:8px;margin-top:3px}
.pmain{flex:1;min-width:0;background:#fff;display:flex;flex-direction:column}
.ptools{height:27px;flex:none;display:flex;align-items:center;gap:10px;background:#f5f5f5;padding-left:2px}
.ptools .it{gap:6px;margin-right:-3px}
.twrap{flex:1;overflow:hidden;padding-left:0;border-top:1px solid #c8c8c8}
.grid{table-layout:fixed;border-collapse:collapse;width:1128px;font-size:12px}
.c30{width:30px}.c42{width:42px}.c81{width:81px}.c101{width:101px}.c71{width:71px}.c41{width:41px}
.grid th{height:19px;padding:0;font-weight:normal;text-align:center;border:1px solid #c8c8c8;border-top:0;background:linear-gradient(#fff,#efefef);overflow:hidden;white-space:nowrap}
.grid .span-h{background:linear-gradient(#ffe9bd,#fbc97e);color:#a0101e}
.grid td{height:19px;padding:0 0 0 2px;border:1px solid #c8c8c8;border-top:0;font:11px/18px "Liberation Mono","Noto Sans CJK SC",monospace;letter-spacing:-.6px;overflow:hidden;white-space:nowrap;position:relative}
.grid .rh{background:#f0f0f0;text-align:center;padding:0}
.grid .rh.on{background:#fcd592}
.selrow td{background:#a4c8f0}
.grid .cur{border:2px solid #6a6a6a;padding-left:1px;overflow:visible}
.handle{position:absolute;right:-3px;bottom:-3px;width:5px;height:5px;background:#777;border:1px solid #fff}
.caretcell{border-right:1px solid #111!important}
.notes{position:absolute;left:0;top:0;width:1338px;height:662px;pointer-events:none}
.note{font-size:16px;fill:#c8201e}
```
